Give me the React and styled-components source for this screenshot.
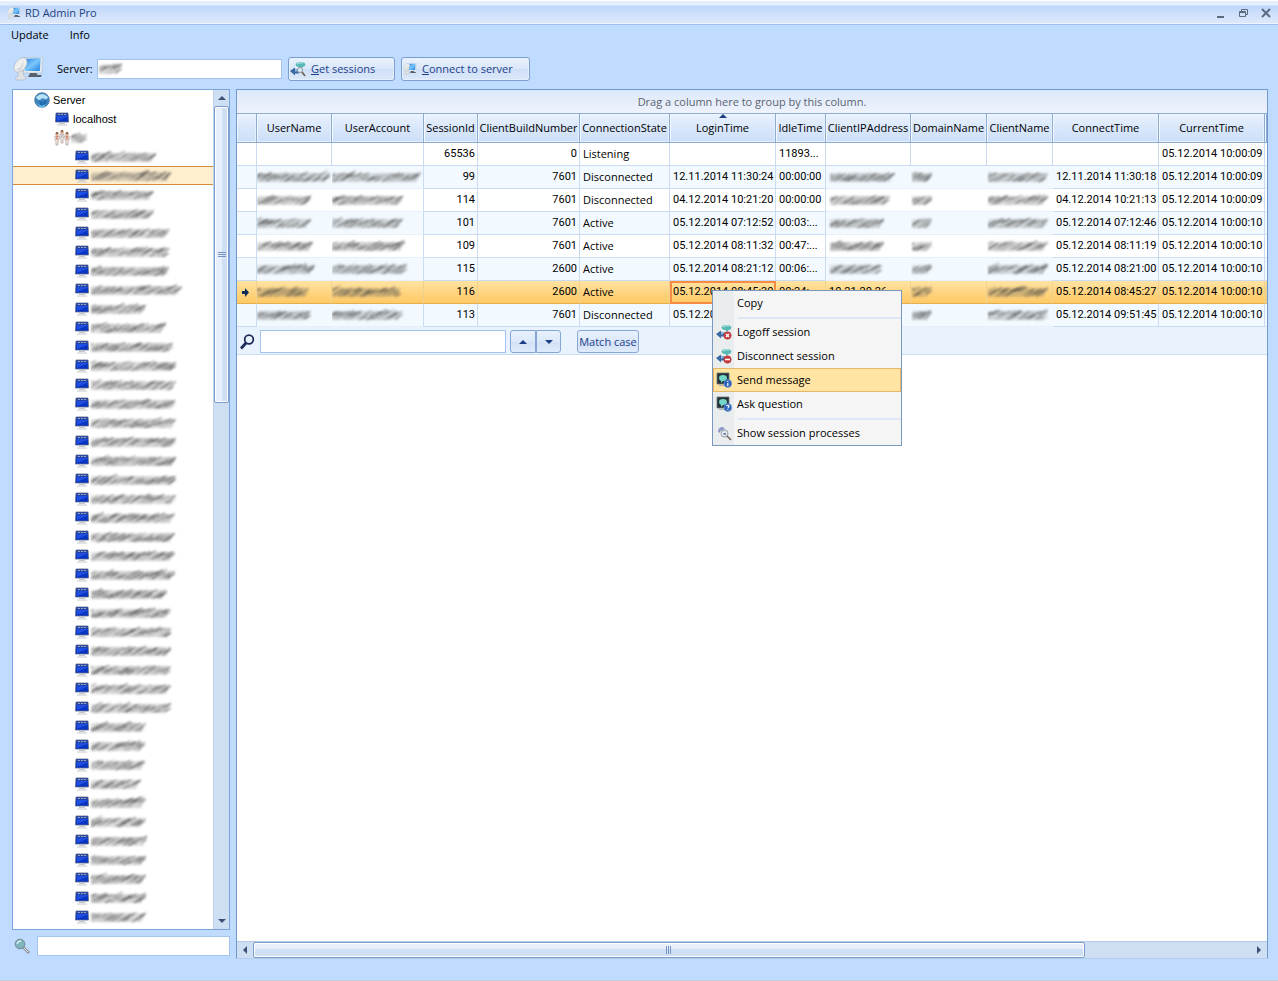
import React from "react";
import styled, { createGlobalStyle, css } from "styled-components";

const Global = createGlobalStyle`
  * { box-sizing: border-box; }
  body { margin: 0; background: #bfdbff; }
  body, button, input, table { font-family: "Open Sans", "Noto Sans", sans-serif; font-size: 11px; line-height: 16px; color: #000; }
  button { margin: 0; padding: 0; border: 0; background: none; }
  input { margin: 0; border-radius: 0; outline: none; }
  ul { list-style: none; margin: 0; padding: 0; }
  svg { display: block; flex: none; }
`;

const Window = styled.div`
  display: flex;
  flex-direction: column;
  min-height: 100vh;
  background: #bfdbff;
  border-bottom: 1px solid #c4ccd8;
`;
const TitleBar = styled.header`
  display: flex;
  align-items: center;
  height: 25px;
  padding: 0 6px 0 7px;
  border-top: 1px solid #fff;
  border-bottom: 1px solid #9dbfee;
  box-shadow: inset 0 -1px #edf4fe;
  background: linear-gradient(#e3effd 0 4px, #bdd5fb 5px, #c8dcfb 40%, #dfeafb 100%);
`;
const Title = styled.h1`
  flex: 1;
  margin: 0 0 0 4px;
  font-size: 11px;
  font-weight: 400;
  color: #1c3f7e;
`;
const WinButtons = styled.div`
  display: flex;
  gap: 11px;
`;
const WinButton = styled.button`
  width: 12px;
  height: 12px;
`;
const MenuBar = styled.nav`
  display: flex;
  height: 20px;
  padding-left: 11px;
  gap: 21px;
`;
const MenuButton = styled.button`
  text-align: left;
`;
const ToolBar = styled.form`
  display: flex;
  align-items: center;
  height: 44px;
  padding: 4px 0 0 12px;
`;
const ServerLabel = styled.label`
  width: 40px;
  margin-left: 13px;
`;
const FieldBox = styled.div`
  position: relative;
  display: flex;
  width: ${(p) => p.$width || "auto"};
  flex: ${(p) => (p.$width ? "none" : 1)};
`;
const Field = styled.input`
  width: 100%;
  min-width: 0;
  height: ${(p) => p.$height || 20}px;
  padding: 0 3px;
  border: 1px solid #a3c3ee;
  background: #fff;
`;
const FieldMask = styled.span`
  position: absolute;
  left: 2px;
  top: 2px;
`;
const ToolButton = styled.button`
  display: flex;
  align-items: center;
  gap: 5px;
  width: ${(p) => p.$width}px;
  height: 24px;
  margin-left: 6px;
  padding-left: 1px;
  border: 1px solid #7d9fd0;
  border-radius: 3px;
  background: linear-gradient(#eaf2fd, #d9e7f9 50%, #cfdff6 51%, #dbe8fa);
  box-shadow: inset 0 0 0 1px #e6f0fd;
  color: #1c3f8a;
`;
const Main = styled.main`
  display: flex;
  flex: 1;
  gap: 6px;
  padding: 0 10px 21px 12px;
`;
const Side = styled.aside`
  display: flex;
  flex-direction: column;
  flex: none;
  width: 218px;
`;
const TreeBox = styled.div`
  display: flex;
  flex: 1;
  border: 1px solid #7ba3dc;
  background: #fff;
`;
const Tree = styled.ul`
  flex: 1;
`;
const TreeRow = styled.li`
  display: flex;
  align-items: center;
  height: 19px;
  gap: ${(p) => p.$gap || 1}px;
  padding-left: ${(p) => p.$indent}px;
  ${(p) =>
    p.$selected &&
    css`
      background: #ffefcf;
      box-shadow: inset 0 1px #d48b3c, inset 0 -1px #d48b3c;
    `}
`;
const TreeText = styled.span`
  font-family: "Liberation Sans", sans-serif;
`;
const SideSearch = styled.div`
  display: flex;
  align-items: center;
  gap: 7px;
  padding: 6px 0 3px 2px;
`;
const VBar = styled.div`
  display: flex;
  flex-direction: column;
  width: 16px;
  background: #cfdff3;
  border-left: 1px solid #bdd2ee;
`;
const HBar = styled.div`
  display: flex;
  height: 17px;
  margin-top: auto;
  background: #cfdff3;
  border-top: 1px solid #b5cdec;
`;
const ScrollArrow = styled.button`
  display: grid;
  place-items: center;
  flex: none;
  width: 16px;
  height: 16px;
`;
const Thumb = styled.div`
  display: grid;
  place-items: center;
  border: 1px solid #7c9cc9;
  border-radius: 2px;
  box-shadow: inset 0 0 0 1px #fff;
  ${(p) =>
    p.$vertical
      ? css`
          height: 297px;
          background: linear-gradient(90deg, #e6effb 50%, #d0e0f4 51%);
        `
      : css`
          width: calc(100% * 5 / 6);
          height: 16px;
          background: linear-gradient(#e8effa 45%, #d0e0f4 46%);
        `}
`;
const Track = styled.div`
  flex: 1;
`;
const GridPanel = styled.section`
  position: relative;
  display: flex;
  flex-direction: column;
  flex: 1;
  min-width: 0;
  border: 1px solid #6f99cf;
  border-bottom-color: #b5cdec;
  background: #fff;
`;
const GroupBar = styled.div`
  height: 23px;
  padding-top: 4px;
  text-align: center;
  color: #5c6470;
  background: linear-gradient(#dce8fa, #eff3fc);
`;
const Grid = styled.table`
  width: 100%;
  table-layout: fixed;
  border-collapse: separate;
  border-spacing: 0;
`;
const HeadCell = styled.th`
  position: relative;
  height: 30px;
  padding: 0;
  overflow: hidden;
  white-space: nowrap;
  font-weight: 400;
  border: 1px solid #8eabd0;
  border-width: 1px 1px 1px 0;
  background: linear-gradient(#e9f2fe, #d9e7fb 50%, #cbdef8);
  box-shadow: inset 1px 1px #f2f8ff, inset -1px -1px #e6f0fd;
`;
const SortMark = styled.span`
  position: absolute;
  top: -2px;
  left: 50%;
  margin-left: -4px;
`;
const Row = styled.tr`
  background: ${(p) => (p.$alt ? "#f3faff" : "#fff")};
  ${(p) => p.$selected && css`background: linear-gradient(#ffe3a3, #ffd27a 60%, #ffc964);`}
`;
const Cell = styled.td`
  height: 23px;
  padding: 0 2px 0 3px;
  overflow: hidden;
  white-space: nowrap;
  text-align: ${(p) => p.$align || "left"};
  border-bottom: 1px solid ${(p) => (p.$selected ? "#e3b04f" : p.$masked ? "#e6effa" : "#cbdcf2")};
  border-right: 1px solid ${(p) => (p.$selected ? "#eed08f" : p.$open ? "transparent" : "#cbdcf2")};
  ${(p) => p.$number && css`font-family: Roboto, sans-serif;`}
  ${(p) => p.$masked && css`padding: 0 0 0 ${p.$pad || 0}px;`}
  ${(p) => p.$focus && css`outline: 2px solid #f68b43; outline-offset: -2px;`}
`;
const FindBar = styled.form`
  display: flex;
  align-items: center;
  height: 28px;
  padding: 2px 0 0 3px;
  background: #e9f3fe;
  border-bottom: 1px solid #c8dcf4;
`;
const FindField = styled(Field)`
  width: 246px;
  margin: 0 4px 0 5px;
`;
const FindButton = styled.button`
  display: grid;
  place-items: center;
  width: ${(p) => p.$width}px;
  height: 23px;
  margin-left: ${(p) => p.$gap || 0}px;
  border: 1px solid #86a6d4;
  border-radius: ${(p) => p.$radius || "3px"};
  background: linear-gradient(#e8f1fd, #dce8f9 50%, #d2e0f6 51%, #dfebfb);
  color: #1c3f8a;
`;
const Popup = styled.div`
  position: absolute;
  left: 475px;
  top: 200px;
  width: 190px;
  border: 1px solid #7b97bd;
  background: linear-gradient(90deg, #e9edee 21px, #f5f5f5 21px);
`;
const PopupItem = styled.button`
  display: flex;
  align-items: center;
  gap: 5px;
  width: 100%;
  height: 24px;
  padding-left: 3px;
  text-align: left;
  ${(p) =>
    p.$active &&
    css`
      background: #ffe4a3;
      box-shadow: inset 0 0 0 1px #e6b766;
    `}
`;
const PopupRule = styled.hr`
  height: 2px;
  margin: 2px 0 1px 25px;
  border: 0;
  background: #dde7f5;
`;
const IconSlot = styled.span`
  width: 16px;
  height: 16px;
`;
const Mnemonic = styled.span`
  text-decoration: underline;
`;
const Blurred = styled.svg`
  filter: blur(0.8px);
`;

function Smudge({ width, seed = 1, height = 16 }) {
  const strokes = [];
  let s = seed * 7919 + 13;
  const rnd = () => {
    s = (s * 16807) % 2147483647;
    return s / 2147483647;
  };
  strokes.push(
    <path key="base" d={`M0 4H${width - 1}L${width - 5} 13H0z`} fill="#777" fillOpacity="0.22" />
  );
  for (let x = -4; x < width - 5; x += 2.6) {
    const y = height - 3 - rnd() * 6;
    const len = Math.min(5 + rnd() * 5, width - x);
    strokes.push(
      <path key={x} d={`M${x} ${y}l${len} ${-len * 0.55}`} stroke="#333" strokeOpacity={0.12 + rnd() * 0.38} strokeWidth="1.6" />
    );
    strokes.push(
      <path key={`b${x}`} d={`M${x} ${height - 3}L${Math.min(x + 12, width)} 4`} stroke="#555" strokeOpacity={rnd() * 0.3} strokeWidth="1.5" />
    );
  }
  return (
    <Blurred width={width} height={height} fill="none" aria-hidden="true">
      {strokes}
    </Blurred>
  );
}

const Dish = ({ size = 16, height }) => (
  <svg width={size} height={height || size} viewBox="0 0 30 24" preserveAspectRatio="none" aria-hidden="true">
    <defs>
      <linearGradient id="screen" x1="0" y1="0" x2="1" y2="1">
        <stop offset="0" stopColor="#1b7be0" />
        <stop offset="0.5" stopColor="#7dc7fb" />
        <stop offset="1" stopColor="#1c7fe0" />
      </linearGradient>
    </defs>
    <path d="M9 1l20-1-1 16-17 0z" fill="#e6ebf0" stroke="#a9b4c0" strokeWidth="0.5" />
    <path d="M11 2l16-1-1 13-14 0z" fill="url(#screen)" />
    <path d="M17 16h6l1 2h4l-1 2H15l1-2z" fill="#56616c" />
    <path d="M5 14l5-1 1 6 3 2-3 2H4l-1-2 3-2z" fill="#dfe2e5" stroke="#a7adb3" strokeWidth="0.5" />
    <ellipse cx="8" cy="8" rx="5" ry="8" transform="rotate(35 8 8)" fill="#eeefef" stroke="#b3b6b9" strokeWidth="0.6" />
    <path d="M4 12q4 0 7-8q0 9-5 10z" fill="#d5d8da" />
  </svg>
);

const Globe = () => (
  <svg width="16" height="16" viewBox="0 0 16 16" aria-hidden="true">
    <circle cx="8" cy="8" r="7.3" fill="#3e86bd" stroke="#426f9a" strokeWidth="0.8" />
    <path d="M2 5q6-6 12 0q-1 3-3 2q-3-2-5 1q-3 0-4-3z" fill="#b9e2f6" />
    <path d="M5 8l3 2 5-2-1 4q-4 3-6 1z" fill="#236db0" />
    <path d="M3 11q4 5 9 1l-2 3q-5 1-7-4z" fill="#66c4ee" />
  </svg>
);

const Monitor = () => (
  <svg width="14" height="14" viewBox="0 0 14 14" aria-hidden="true">
    <path d="M1 1h12l.5 9H.5z" fill="#0834c4" stroke="#5b6985" strokeWidth="0.8" />
    <path d="M2 4h10v1L2 9z" fill="#1f4fe0" />
    <path d="M1.500 1.500h11v2h-11z" fill="#3a4f8c" />
    <path d="M3 2h2v1H3zm3 0h2v1H6zm3 0h2v1H9z" fill="#93a3cc" />
    <path d="M4 11.500h6M2 13h10" stroke="#c3c7cb" />
  </svg>
);

const People = () => (
  <svg width="16" height="16" viewBox="0 0 16 16" aria-hidden="true">
    {[1, 6, 11].map((x) => {
      const dy = x === 6 ? -1 : 1;
      return (
        <g key={x} transform={`translate(0 ${dy})`}>
          <path d={`M${x} 5h4v4l-1 1v4h-2v-4l-1-1z`} fill="#f6eee8" stroke="#a89a90" strokeWidth="0.7" />
          <path d={`M${x + 2} 5v4`} stroke={x === 6 ? "#9aa1a8" : "#c24d33"} />
          <circle cx={x + 2} cy="3" r="1.700" fill="#d9a37e" />
          <path d={`M${x + 0.5} 2.500q1.500-3 3 0z`} fill="#4d362b" />
        </g>
      );
    })}
  </svg>
);

const Session = ({ badge }) => (
  <svg width="16" height="16" viewBox="0 0 16 16" aria-hidden="true">
    <ellipse cx="10.5" cy="3.5" rx="4.8" ry="2.6" fill="#56b9b3" />
    <path d="M7 3q3-2 6-1" stroke="#b9eee7" fill="none" />
    <path d="M9 5.500l4 0-2 2.500z" fill="#56b9b3" />
    <path d="M0 10l5-3.500v2h4v4H5v2z" fill="#39679f" />
    <path d="M5 8l4 1-4 2z" fill="#8bb6df" />
    {badge === "find" ? (
      <g fill="none">
        <circle cx="10" cy="9" r="2.6" fill="#d9e6ef" stroke="#8d9cab" />
        <path d="M12 11l3 4" stroke="#735e50" strokeWidth="1.5" />
      </g>
    ) : (
      <g>
        <circle cx="11.5" cy="11.5" r="3.7" fill="#d03a3f" stroke="#a83236" strokeWidth="0.6" />
        <path d={badge === "x" ? "M10 10l3 3m0-3l-3 3" : "M9 11.5h5"} stroke="#fff" strokeWidth="1.5" />
      </g>
    )}
  </svg>
);

const Message = ({ ask }) => (
  <svg width="16" height="16" viewBox="0 0 16 16" aria-hidden="true">
    <path d="M1 1h12v11H1z" fill="#263238" stroke="#66757a" strokeWidth="0.8" />
    <path d="M3 6q0-3 4-3t4 3-4 3l-2 2V9Q3 8 3 6z" fill="#72d6c9" />
    <path d="M3 13h6v1H3z" fill="#a8b1b5" />
    <circle cx="11.8" cy="11.5" r="3.9" fill="#2b62ba" stroke="#7fa1d5" strokeWidth="0.6" />
    <path d={ask ? "M10.5 10q1.3-1.5 2.5 0 0 1-1.2 1.7m0 1v1" : "M11.8 9v1m0 1v3"} stroke="#fff" strokeWidth="1.2" fill="none" />
  </svg>
);

const Processes = () => (
  <svg width="16" height="16" viewBox="0 0 16 16" fill="none" aria-hidden="true">
    <path d="M2 7Q2 2 7 2l2 2-2 1Q4 5 4 8z" fill="#8f98c6" />
    <circle cx="8.5" cy="8.5" r="3.3" fill="#e5eaf0" stroke="#a5adb8" strokeWidth="1.2" />
    <path d="M7 8h3v2H8z" fill="#7886b2" />
    <path d="M11 11l4 4" stroke="#6b5b51" strokeWidth="1.5" />
  </svg>
);

const Lens = () => (
  <svg width="16" height="16" viewBox="0 0 16 16" fill="none" aria-hidden="true">
    <path d="M9 9l6 6" stroke="#8e9499" strokeWidth="2.6" />
    <path d="M10 10l4 4" stroke="#dfe3e5" strokeWidth="1" />
    <circle cx="6" cy="6" r="4.8" fill="#7eb5bd" stroke="#758992" />
    <path d="M3 6q1-3 4-3" stroke="#d8f3f2" strokeWidth="1.5" />
  </svg>
);

const FindIcon = () => (
  <svg width="15" height="16" viewBox="0 0 15 16" fill="none" stroke="#1d2b57" aria-hidden="true">
    <circle cx="9" cy="5.5" r="4.3" strokeWidth="1.8" />
    <path d="M6 9l-5 5.5" strokeWidth="2.8" />
  </svg>
);

const Arrow = ({ dir, color = "#3b5176" }) => {
  const d = { up: "M0 6l4-4 4 4z", down: "M0 2l4 4 4-4z", left: "M6 0L2 4l4 4z", right: "M2 0l4 4-4 4z" }[dir];
  return (
    <svg width="8" height="8" viewBox="0 0 8 8" fill={color} aria-hidden="true">
      <path d={d} />
    </svg>
  );
};

const Grip = ({ vertical }) => (
  <svg width="8" height="8" viewBox="0 0 8 8" stroke="#7594c0" aria-hidden="true">
    <path d={vertical ? "M0 1.5h8M0 3.5h8M0 5.5h8" : "M1.5 0v8M3.5 0v8M5.5 0v8"} />
  </svg>
);

const treeWidths = [
  65, 80, 63, 63, 79, 79, 78, 91, 55, 75, 82, 85, 85, 85, 85, 85, 85, 85, 85, 84, 84, 84, 84, 76, 80, 80, 80, 80, 80, 80,
  55, 54, 54, 50, 55, 55, 56, 55, 55, 55, 55,
];

const columns = [
  ["", 20], ["UserName", 75], ["UserAccount", 92], ["SessionId", 54], ["ClientBuildNumber", 102], ["ConnectionState", 90],
  ["LoginTime", 106], ["IdleTime", 50], ["ClientIPAddress", 85], ["DomainName", 76], ["ClientName", 66],
  ["ConnectTime", 106], ["CurrentTime", 106], ["", null],
];

const sessions = [
  { id: "65536", build: "0", state: "Listening", login: "", idle: "11893...", connect: "", now: "05.12.2014 10:00:09" },
  { name: 73, account: 89, id: "99", build: "7601", state: "Disconnected", login: "12.11.2014 11:30:24", idle: "00:00:00", ip: 65, connect: "12.11.2014 11:30:18", now: "05.12.2014 10:00:09" },
  { name: 54, account: 71, id: "114", build: "7601", state: "Disconnected", login: "04.12.2014 10:21:20", idle: "00:00:00", ip: 60, connect: "04.12.2014 10:21:13", now: "05.12.2014 10:00:09" },
  { name: 54, account: 71, id: "101", build: "7601", state: "Active", login: "05.12.2014 07:12:52", idle: "00:03:...", ip: 54, connect: "05.12.2014 07:12:46", now: "05.12.2014 10:00:10" },
  { name: 56, account: 73, id: "109", build: "7601", state: "Active", login: "05.12.2014 08:11:32", idle: "00:47:...", ip: 54, connect: "05.12.2014 08:11:19", now: "05.12.2014 10:00:10" },
  { name: 58, account: 75, id: "115", build: "2600", state: "Active", login: "05.12.2014 08:21:12", idle: "00:06:...", ip: 53, connect: "05.12.2014 08:21:00", now: "05.12.2014 10:00:10" },
  { name: 52, account: 69, id: "116", build: "2600", state: "Active", login: "05.12.2014 08:45:30", idle: "00:24:...", ipText: "10.21.20.26", connect: "05.12.2014 08:45:27", now: "05.12.2014 10:00:10", selected: true },
  { name: 54, account: 71, id: "113", build: "7601", state: "Disconnected", login: "05.12.2014 09:51:48", idle: "00:00:...", ip: 54, connect: "05.12.2014 09:51:45", now: "05.12.2014 10:00:10" },
];

function SessionRow({ data, index }) {
  const sel = data.selected;
  const masked = !!data.name;
  const mask = (width, seed) => (width ? <Smudge width={width} seed={seed + index * 10} /> : null);
  return (
    <Row $alt={index % 2 === 1} $selected={sel}>
      <Cell $selected={sel}>
        {sel && (
          <svg width="10" height="9" viewBox="0 0 10 9" fill="#122a56" aria-label="Current row">
            <path d="M2 3h3V0l4 4.5L5 9V6H2z" />
          </svg>
        )}
      </Cell>
      <Cell $selected={sel} $masked={masked} $open={masked}>{mask(data.name, 1)}</Cell>
      <Cell $selected={sel} $masked={masked}>{mask(data.account, 2)}</Cell>
      <Cell $selected={sel} $number $align="right">{data.id}</Cell>
      <Cell $selected={sel} $number $align="right">{data.build}</Cell>
      <Cell $selected={sel}>{data.state}</Cell>
      <Cell $selected={sel} $number $focus={sel}>{data.login}</Cell>
      <Cell $selected={sel} $number>{data.idle}</Cell>
      <Cell $selected={sel} $number={!!data.ipText} $masked={!!data.ip} $open={!!data.ip} $pad={4}>{data.ipText || mask(data.ip, 3)}</Cell>
      <Cell $selected={sel} $masked={masked} $open={masked} $pad={1}>{masked && mask(20, 4)}</Cell>
      <Cell $selected={sel} $masked={masked} $open={masked} $pad={1}>{masked && mask(60, 5)}</Cell>
      <Cell $selected={sel} $number>{data.connect}</Cell>
      <Cell $selected={sel} $number>{data.now}</Cell>
      <Cell $selected={sel} $open />
    </Row>
  );
}

const VScroll = () => (
  <VBar>
    <ScrollArrow type="button" aria-label="Scroll up"><Arrow dir="up" /></ScrollArrow>
    <Thumb $vertical><Grip vertical /></Thumb>
    <Track />
    <ScrollArrow type="button" aria-label="Scroll down"><Arrow dir="down" /></ScrollArrow>
  </VBar>
);

const HScroll = () => (
  <HBar>
    <ScrollArrow type="button" aria-label="Scroll left"><Arrow dir="left" /></ScrollArrow>
    <Track><Thumb><Grip /></Thumb></Track>
    <ScrollArrow type="button" aria-label="Scroll right"><Arrow dir="right" /></ScrollArrow>
  </HBar>
);

const ContextMenu = () => (
  <Popup role="menu">
    <PopupItem role="menuitem"><IconSlot />Copy</PopupItem>
    <PopupRule />
    <PopupItem role="menuitem"><Session badge="x" />Logoff session</PopupItem>
    <PopupItem role="menuitem"><Session badge="minus" />Disconnect session</PopupItem>
    <PopupItem role="menuitem" $active><Message />Send message</PopupItem>
    <PopupItem role="menuitem"><Message ask />Ask question</PopupItem>
    <PopupRule />
    <PopupItem role="menuitem"><Processes />Show session processes</PopupItem>
  </Popup>
);

export default function App() {
  return (
    <>
      <Global />
      <Window>
        <TitleBar>
          <Dish size={14} height={12} />
          <Title>RD Admin Pro</Title>
          <WinButtons>
            <WinButton aria-label="Minimize">
              <svg width="12" height="12"><path d="M3 9h7v2H3z" fill="#5d6b80" /></svg>
            </WinButton>
            <WinButton aria-label="Restore">
              <svg width="12" height="12" fill="none" stroke="#5d6b80"><path d="M4.5 4V2.5h6v5H9M2.5 4.5h6v5h-6zM2 5.5h7" /></svg>
            </WinButton>
            <WinButton aria-label="Close">
              <svg width="12" height="12" stroke="#5d6b80" strokeWidth="2"><path d="M2 2l8 8M10 2l-8 8" /></svg>
            </WinButton>
          </WinButtons>
        </TitleBar>
        <MenuBar>
          <MenuButton>Update</MenuButton>
          <MenuButton>Info</MenuButton>
        </MenuBar>
        <ToolBar onSubmit={(e) => e.preventDefault()}>
          <Dish size={32} height={24} />
          <ServerLabel htmlFor="server">Server:</ServerLabel>
          <FieldBox $width="185px">
            <Field id="server" />
            <FieldMask><Smudge width={23} seed={5} /></FieldMask>
          </FieldBox>
          <ToolButton type="button" $width={107}>
            <Session badge="find" />
            <span><Mnemonic>G</Mnemonic>et sessions</span>
          </ToolButton>
          <ToolButton type="button" $width={129}>
            <Dish size={14} height={12} />
            <span><Mnemonic>C</Mnemonic>onnect to server</span>
          </ToolButton>
        </ToolBar>
        <Main>
          <Side>
            <TreeBox>
              <Tree>
                <TreeRow $indent={21} $gap={3}><Globe /><TreeText>Server</TreeText></TreeRow>
                <TreeRow $indent={42} $gap={4}><Monitor /><TreeText>localhost</TreeText></TreeRow>
                <TreeRow $indent={41}><People /><Smudge width={16} seed={9} /></TreeRow>
                {treeWidths.map((w, i) => (
                  <TreeRow key={i} $indent={62} $gap={2} $selected={i === 1}>
                    <Monitor />
                    <Smudge width={w} seed={i + 20} />
                  </TreeRow>
                ))}
              </Tree>
              <VScroll />
            </TreeBox>
            <SideSearch>
              <Lens />
              <FieldBox><Field aria-label="Search servers" /></FieldBox>
            </SideSearch>
          </Side>
          <GridPanel>
            <GroupBar>Drag a column here to group by this column.</GroupBar>
            <Grid>
              <colgroup>
                {columns.map(([, w], i) => <col key={i} width={w || undefined} />)}
              </colgroup>
              <thead>
                <tr>
                  {columns.map(([label], i) => (
                    <HeadCell key={i} scope="col">
                      {label}
                      {label === "LoginTime" && <SortMark><Arrow dir="up" color="#1b3d7c" /></SortMark>}
                    </HeadCell>
                  ))}
                </tr>
              </thead>
              <tbody>
                {sessions.map((s, i) => <SessionRow key={s.id} data={s} index={i} />)}
              </tbody>
            </Grid>
            <FindBar onSubmit={(e) => e.preventDefault()}>
              <FindIcon />
              <FindField $height={23} aria-label="Find" />
              <FindButton type="button" $width={26} $radius="3px 0 0 3px" aria-label="Previous match"><Arrow dir="up" color="#1c3f8a" /></FindButton>
              <FindButton type="button" $width={25} $radius="0 3px 3px 0" aria-label="Next match"><Arrow dir="down" color="#1c3f8a" /></FindButton>
              <FindButton type="button" $width={62} $gap={16}>Match case</FindButton>
            </FindBar>
            <HScroll />
            <ContextMenu />
          </GridPanel>
        </Main>
      </Window>
    </>
  );
}
